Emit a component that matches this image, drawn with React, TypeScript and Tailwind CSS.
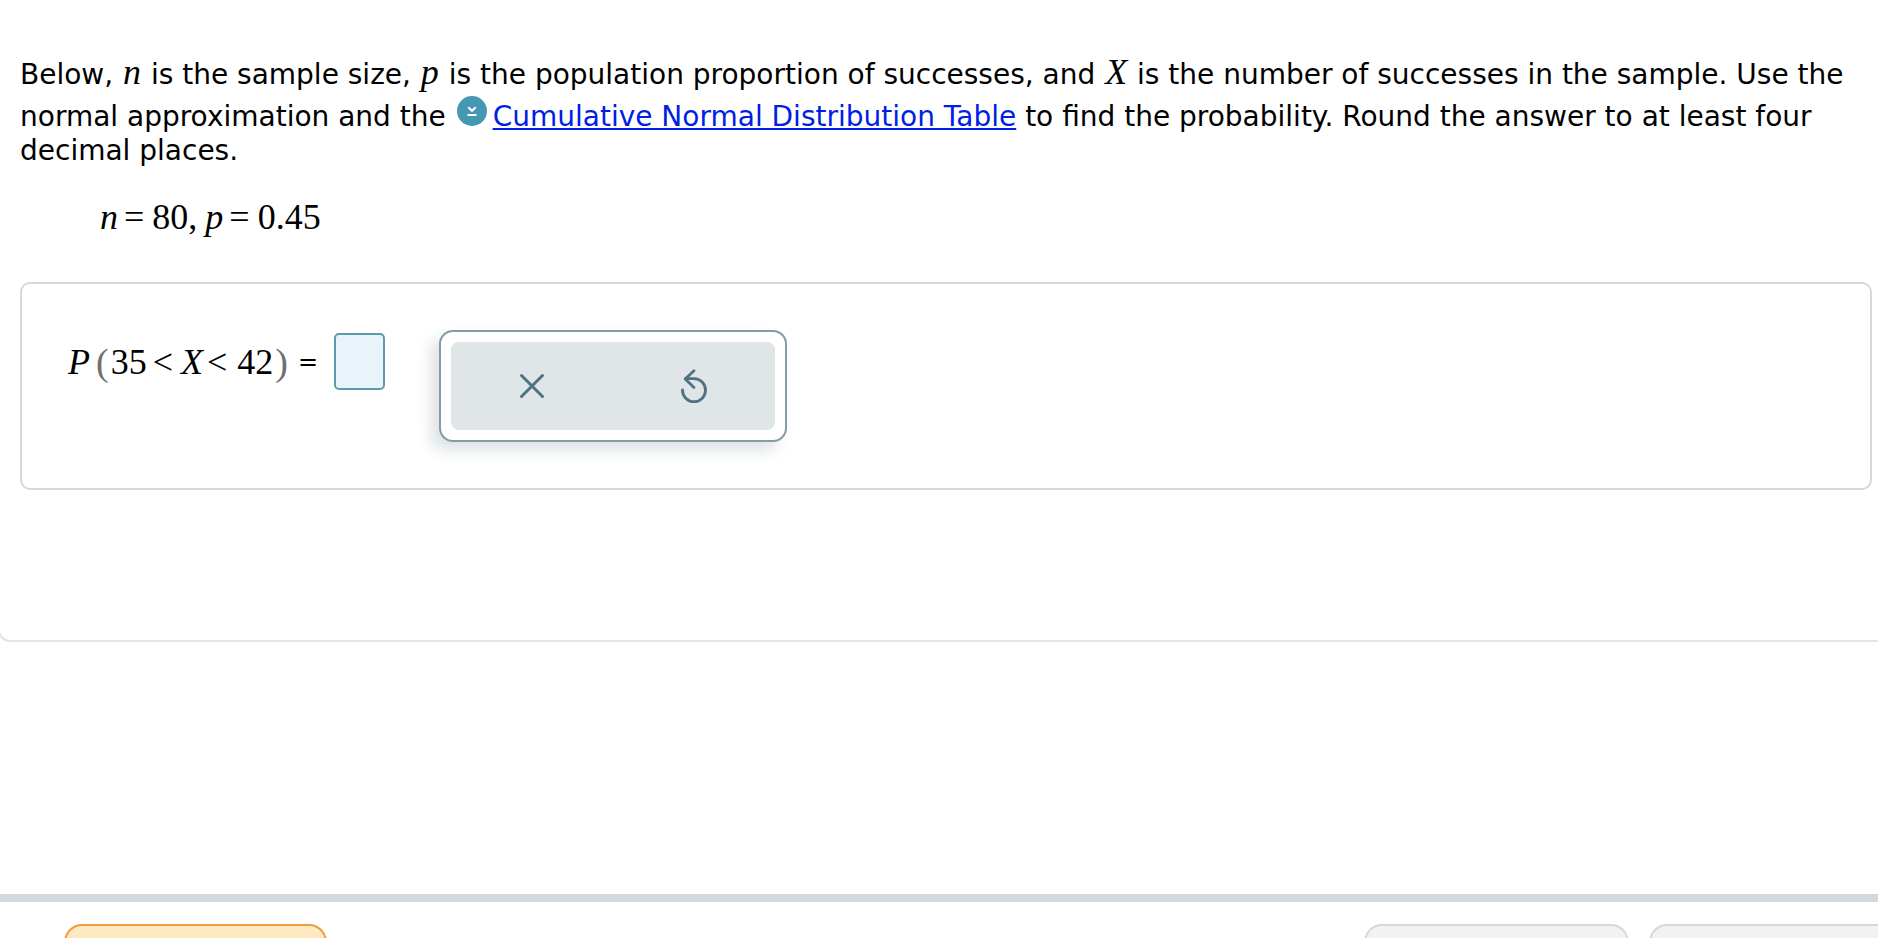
import React from "react";

function MathText({ children }: { children: React.ReactNode }) {
  return (
    <i className="mx-px font-['Liberation_Serif',serif] text-[36px] leading-none">{children}</i>
  );
}

function DownloadBadge() {
  return (
    <svg viewBox="0 0 30 30" className="mt-1 mr-1.5 ml-0.5 inline-block h-[30px] w-[30px] align-baseline" aria-hidden="true">
      <circle cx="15" cy="15" r="15" fill="#4598b3" />
      <path d="M11.3 11.3 15 14.8l3.7-3.5M10.5 19h9" fill="none" stroke="#fff" strokeWidth="2" />
    </svg>
  );
}

function Question() {
  return (
    <div className="px-5">
      <p className="text-[28px] leading-[34px]">
        Below, <MathText>n</MathText> is the sample size, <MathText>p</MathText> is the population
        proportion of successes, and <MathText>X</MathText> is the number of successes in the
        sample. Use the normal approximation and the <DownloadBadge />
        <a href="#table" className="text-[#001ee6] underline decoration-2 underline-offset-2">
          Cumulative Normal Distribution Table
        </a>{" "}
        to find the probability. Round the answer to at least four decimal places.
      </p>
      <div className="mt-7 flex items-baseline pl-20 font-['Liberation_Serif',serif] text-[36px] leading-[42px]">
        <i>n</i>
        <span className="ml-1.5">=</span>
        <span className="ml-2">80,</span>
        <i className="ml-2">p</i>
        <span className="ml-1.5">=</span>
        <span className="ml-2">0.45</span>
      </div>
    </div>
  );
}

function Toolbar() {
  return (
    <div className="w-[348px] rounded-[14px] border-2 border-[#839ca5] bg-white p-[10px] shadow-[-8px_8px_16px_#dce2e6]">
      <div className="grid h-[88px] grid-cols-2 rounded-lg bg-[#e0e5e8] text-[#4e7280]">
        <button type="button" aria-label="Clear" className="flex items-center justify-center">
          <svg viewBox="0 0 40 40" className="h-10 w-10" fill="none" stroke="currentColor" strokeWidth="3" strokeLinecap="round">
            <path d="M9.5 9.5 30.5 30.5M30.5 9.5 9.5 30.5" />
          </svg>
        </button>
        <button type="button" aria-label="Reset" className="flex items-center justify-center">
          <svg viewBox="0 0 40 40" className="h-10 w-10" fill="none" stroke="currentColor" strokeWidth="2.8" strokeLinecap="round" strokeLinejoin="round">
            <path d="M8.5 24a11.5 11.5 0 1 0 11.5-11.3H11.2M20 4.8 11.2 13l8.8 8.4" />
          </svg>
        </button>
      </div>
    </div>
  );
}

function AnswerBox() {
  return (
    <div className="mt-11 mr-1.5 ml-5 flex h-[208px] items-start rounded-[10px] border-2 border-[#d3dadd] pl-[46px]">
      <label htmlFor="answer" className="mt-[52px] flex h-[52px] items-center font-['Liberation_Serif',serif] text-[36px] leading-none">
        <i>P</i>
        <span className="ml-1.5 text-[38px] text-[#707070]">(</span>
        <span className="ml-0.5">35</span>
        <span className="ml-1.5">&lt;</span>
        <i className="ml-2">X</i>
        <span className="ml-1">&lt;</span>
        <span className="ml-2.5">42</span>
        <span className="ml-0.5 text-[38px] text-[#707070]">)</span>
        <span className="ml-2.5 font-['DejaVu_Sans',sans-serif] text-[24px]">=</span>
      </label>
      <input
        id="answer"
        type="text"
        className="mt-[49px] ml-4 h-[57px] w-[51px] rounded-[5px] border-2 border-[#5b9cac] bg-[#e8f4fa] text-center text-[28px] outline-none"
      />
      <div className="mt-[46px] ml-[54px]">
        <Toolbar />
      </div>
    </div>
  );
}

function Footer() {
  return (
    <footer className="h-11 shrink-0 overflow-hidden border-t-8 border-[#d3dadd]">
      <div className="ml-16 flex pt-[22px]">
        <button type="button" aria-label="Explanation" className="h-20 w-[263px] rounded-[18px] border-2 border-[#f09c3a] bg-linear-to-b from-[#fdebc8] to-[#f5cf8b]" />
        <button type="button" aria-label="Save" className="mr-5 ml-auto h-20 w-[265px] shrink-0 rounded-[18px] border-2 border-[#d3dadd] bg-[#f0f2f4]" />
        <button type="button" aria-label="Submit" className="-mr-9 h-20 w-[265px] shrink-0 rounded-[18px] border-2 border-[#d3dadd] bg-[#f0f2f4]" />
      </div>
    </footer>
  );
}

export default function App() {
  return (
    <div className="flex h-screen flex-col overflow-hidden bg-white font-['DejaVu_Sans',sans-serif] text-black">
      <main className="flex-1">
        <div className="-ml-[2px] rounded-bl-xl border-b-2 border-l-2 border-[#e0e5e8] pt-[54px] pb-[150px]">
          <Question />
          <AnswerBox />
        </div>
      </main>
      <Footer />
    </div>
  );
}
